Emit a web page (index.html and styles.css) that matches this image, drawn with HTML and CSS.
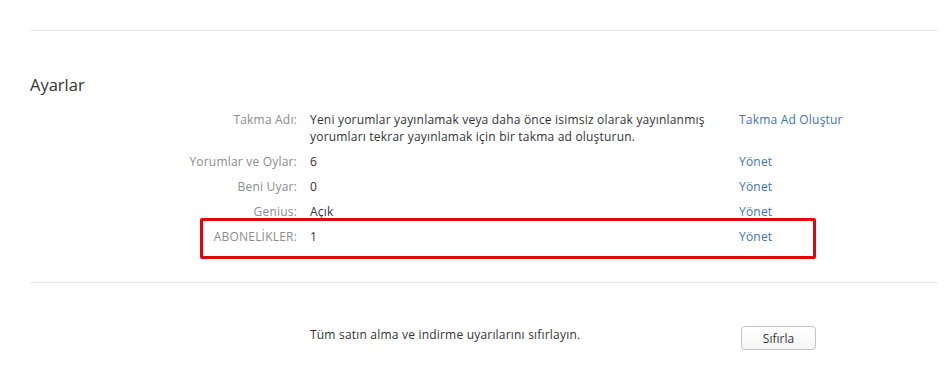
FILE: index.html
```html
<!DOCTYPE html>
<html>
<head>
    <meta charset="UTF-8">
    <title>Ayarlar</title>
    <link rel="stylesheet" href="styles.css">
</head>
<body>
    <div class="page">
        <hr class="divider">

        <!-- Settings -->
        <h2 class="title">Ayarlar</h2>
        <div class="settings">
            <div class="row">
                <div class="label">Takma Adı:</div>
                <div class="value">Yeni yorumlar yayınlamak veya daha önce isimsiz olarak yayınlanmış<br>yorumları tekrar yayınlamak için bir takma ad oluşturun.</div>
                <a class="action" href="#">Takma Ad Oluştur</a>
            </div>
            <div class="row">
                <div class="label">Yorumlar ve Oylar:</div>
                <div class="value">6</div>
                <a class="action" href="#">Yönet</a>
            </div>
            <div class="row">
                <div class="label">Beni Uyar:</div>
                <div class="value">0</div>
                <a class="action" href="#">Yönet</a>
            </div>
            <div class="row">
                <div class="label">Genius:</div>
                <div class="value">Açık</div>
                <a class="action" href="#">Yönet</a>
            </div>
            <div class="row highlight">
                <div class="label caps">ABONELİKLER:</div>
                <div class="value">1</div>
                <a class="action" href="#">Yönet</a>
            </div>
        </div>

        <hr class="divider lower">

        <!-- Reset -->
        <div class="reset">
            <div class="value">Tüm satın alma ve indirme uyarılarını sıfırlayın.</div>
            <button class="reset-btn">Sıfırla</button>
        </div>
    </div>
</body>
</html>
```

FILE: styles.css
```css
body {
    margin: 0;
    font-family: 'Open Sans', 'Noto Sans', sans-serif;
    font-size: 12px;
    letter-spacing: 0.2px;
    color: #333;
    background: #fff;
}
.page {
    padding: 30px 6px 0 30px;
}
.divider {
    margin: 0;
    border: none;
    border-top: 1px solid #e6e6e6;
}
.title {
    margin: 42px 0 0;
    font-size: 16.5px;
    font-weight: normal;
    letter-spacing: 0;
    line-height: 24px;
    color: #333;
}
.settings {
    margin-top: 10px;
}
.row {
    position: relative;
    display: flex;
    line-height: 17px;
    padding: 4px 0;
}
.label {
    width: 267px;
    text-align: right;
    color: #8c8c8c;
}
.value {
    width: 429px;
    margin-left: 13px;
}
.action {
    color: #3f73bd;
    text-decoration: none;
}
.highlight::after {
    content: "";
    position: absolute;
    left: 170px;
    top: -6px;
    width: 610px;
    height: 35px;
    border: 3px solid #e0060b;
    border-radius: 2px;
}
.lower {
    margin-top: 33px;
}
.reset {
    display: flex;
    align-items: flex-start;
    padding-left: 267px;
    margin-top: 43px;
    line-height: 17px;
}
.reset .value {
    width: 431px;
}
.reset-btn {
    width: 75px;
    height: 24px;
    padding: 0;
    font-family: inherit;
    font-size: 12px;
    color: #333;
    background: linear-gradient(#fff, #f6f6f6);
    border: 1px solid #c4c4c4;
    border-radius: 4px;
    box-shadow: 0 1px 1px rgba(0,0,0,0.06);
}
```
